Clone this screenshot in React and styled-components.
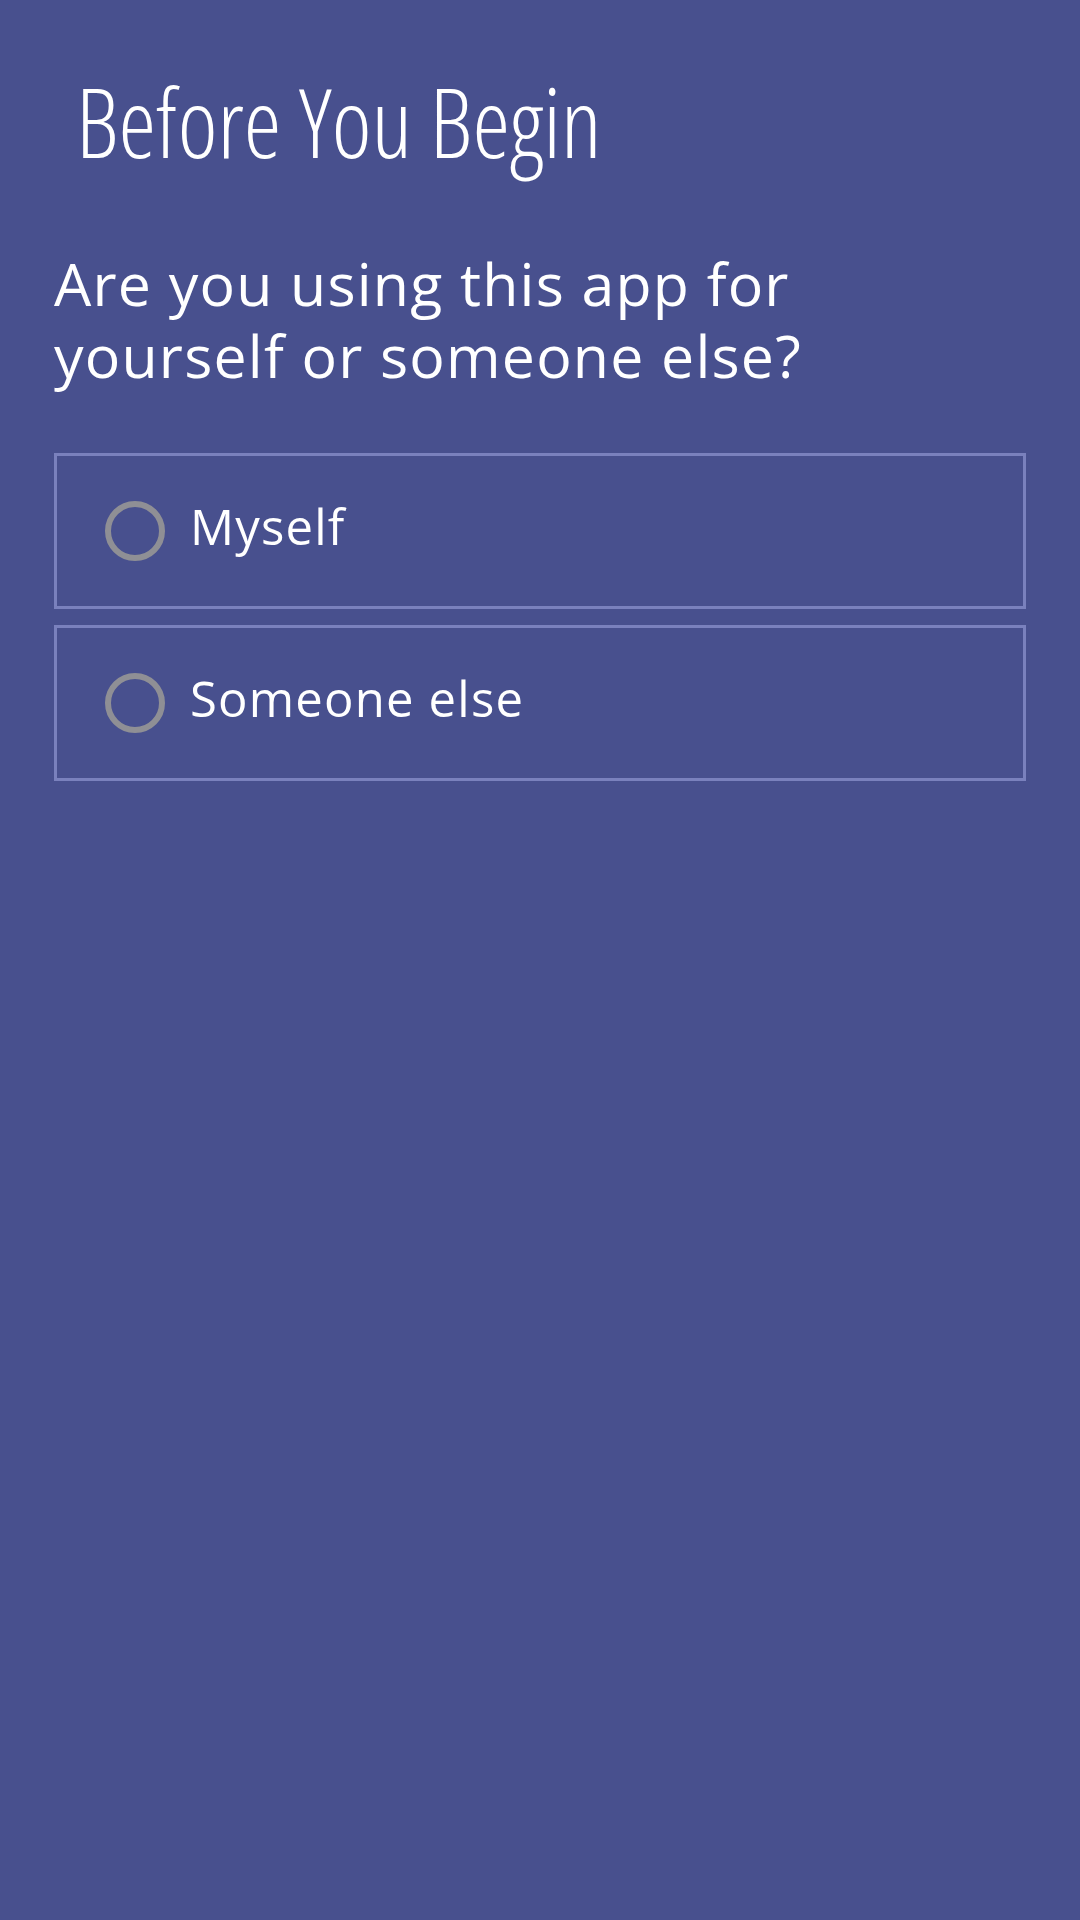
import React, { useState } from "react";
import styled, { createGlobalStyle } from "styled-components";

const Global = createGlobalStyle`
  html, body { margin: 0; padding: 0; background: #48508e; }
  body { font-family: "Open Sans", "Liberation Sans", sans-serif; color: #ffffff; }
  * { box-sizing: border-box; }
`;

const Page = styled.div`
  min-height: 1920px;
  background: #48508e;
  padding: 0 54px;
  display: flex;
  flex-direction: column;
`;

const Title = styled.h1`
  margin: 0;
  padding: 64px 0 0 22px;
  font-family: "Open Sans", sans-serif;
  font-stretch: 75%;
  font-weight: 300;
  font-size: 95px;
  line-height: 115px;
  color: #ffffff;
`;

const Question = styled.h2`
  margin: 0;
  padding-top: 68px;
  display: flex;
  flex-direction: column;
  font-family: "Open Sans", sans-serif;
  font-weight: 400;
  font-size: 59px;
  line-height: 72px;
  letter-spacing: 1.2px;
  color: #ffffff;
`;

const QuestionLine = styled.span`
  display: block;
`;

const Options = styled.div`
  margin-top: 62px;
  display: flex;
  flex-direction: column;
  gap: 16px;
`;

const Option = styled.label`
  display: flex;
  align-items: center;
  height: 156px;
  border: 3px solid #7a81bd;
  padding-left: 48px;
  gap: 25px;
  cursor: pointer;
`;

const Radio = styled.span`
  width: 60px;
  height: 60px;
  border-radius: 50%;
  border: 6px solid ${(p) => (p.$checked ? "#ffffff" : "#8f8f95")};
  flex: none;
  display: flex;
  align-items: center;
  justify-content: center;
  &::after {
    content: "";
    width: 28px;
    height: 28px;
    border-radius: 50%;
    background: #ffffff;
    display: ${(p) => (p.$checked ? "block" : "none")};
  }
`;

const Label = styled.span`
  font-family: "Open Sans", sans-serif;
  font-weight: 400;
  font-size: 49px;
  line-height: 1;
  letter-spacing: 1.2px;
  color: #ffffff;
  margin-top: -9px;
`;

export default function App() {
  const [choice, setChoice] = useState(null);
  const options = ["Myself", "Someone else"];
  return (
    <Page>
      <Global />
      <Title>Before You Begin</Title>
      <Question>
        <QuestionLine>Are you using this app for</QuestionLine>
        <QuestionLine>yourself or someone else?</QuestionLine>
      </Question>
      <Options>
        {options.map((o) => (
          <Option key={o} onClick={() => setChoice(o)}>
            <Radio $checked={choice === o} />
            <Label>{o}</Label>
          </Option>
        ))}
      </Options>
    </Page>
  );
}
